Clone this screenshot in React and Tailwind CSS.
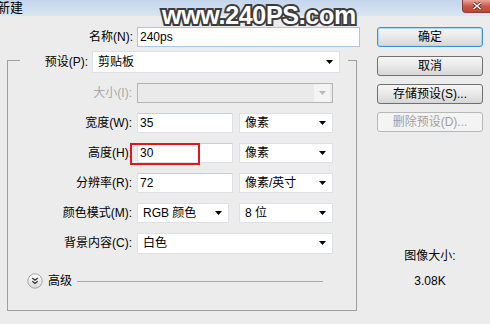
import React from "react";

const Arrow = ({ color = "#000" }) => (
  <svg width="7" height="4" viewBox="0 0 7 4">
    <path d="M0 0 L7 0 L3.5 4 Z" fill={color} />
  </svg>
);

const Select = ({ value, w, h = "h-[20px]", disabled }) => (
  <div
    className={`${w} ${h} flex items-center justify-between border ${
      disabled ? "bg-[#eaeaea] border-[#b4b4b4]" : "bg-white border-[#dde1e6]"
    }`}
  >
    <span className="pl-[5px] text-black">{value}</span>
    <span
      className={`h-full flex items-center justify-center w-[16px] mr-[2px] ${
        disabled ? "bg-[#f4f4f4]" : ""
      }`}
    >
      <Arrow color={disabled ? "#b8b8b8" : "#000"} />
    </span>
  </div>
);

const Input = ({ value, w }) => (
  <div className={`${w} h-[20px] flex items-center bg-white border border-[#dde1e6] border-t-[#c9ced6] pl-[2px] text-black`}>
    {value}
  </div>
);

const Row = ({ label, children, muted }) => (
  <div className="flex items-center h-[20px] mt-[10px]">
    <div className={`w-[124px] text-right ${muted ? "text-[#a8a8a8]" : "text-black"}`}>{label}</div>
    <div className="ml-[5px] flex items-center gap-[6px]">{children}</div>
  </div>
);

const Button = ({ children, primary, disabled }) => (
  <div
    className={`w-[106px] h-[20px] flex items-center justify-center rounded-[3px] border ${
      primary
        ? "border-[#3c8fd0] shadow-[inset_0_0_0_1px_#a6dcf5]"
        : disabled
        ? "border-[#b5b9bc]"
        : "border-[#707070]"
    } ${
      disabled
        ? "bg-[#f4f4f4] text-[#a0a0a0]"
        : "bg-gradient-to-b from-[#f6f6f6] via-[#e9e9e9] to-[#d6d6d6] text-black"
    }`}
  >
    {children}
  </div>
);

export default function App() {
  return (
    <div className="w-[490px] h-[324px] bg-[#ececec] relative overflow-hidden text-[12px] leading-[16px] font-['Liberation_Sans','Noto_Sans_CJK_SC',sans-serif]">
      {/* title bar */}
      <div className="h-[16px] flex items-center justify-between bg-gradient-to-b from-[#c4d6ec] to-[#d9e5f2]">
        <span className="ml-[-3px] text-[13px] text-black">新建</span>
        <div className="w-[28px] h-[13px] self-start flex items-center justify-center rounded-bl-[4px] bg-gradient-to-b from-[#e4a59b] via-[#cd5a4b] to-[#c3412f] border border-[#8e3a30] border-t-0 border-r-0">
          <svg width="10" height="8" viewBox="0 0 10 8">
            <path d="M1.5 1 L8.5 7 M8.5 1 L1.5 7" stroke="#5a2520" strokeWidth="3" />
            <path d="M1.5 1 L8.5 7 M8.5 1 L1.5 7" stroke="#fff" strokeWidth="1.6" />
          </svg>
        </div>
      </div>

      <div className="flex items-start">
        {/* left column */}
        <div className="w-[365px]">
          <div className="flex items-center h-[20px] mt-[11px]">
            <div className="w-[133px] text-right text-black">名称(N):</div>
            <div className="ml-[4px] w-[223px] h-[20px] flex items-center bg-white border border-[#a9c6e4] pl-[2px] text-black">
              240ps
            </div>
          </div>

          {/* group box */}
          <div className="mt-[13px] ml-[7px] w-[350px] h-[251px] border border-[#9f9f9f]">
            <div className="-mt-[10px] ml-[12px] w-[328px] h-[22px] flex items-center bg-[#ececec]">
              <div className="w-[68px] text-right text-black">预设(P):</div>
              <div className="ml-[4px]">
                <Select value="剪贴板" w="w-[248px]" h="h-[22px]" />
              </div>
            </div>

            <Row label="大小(I):" muted>
              <Select value="" w="w-[196px]" disabled />
            </Row>
            <Row label="宽度(W):">
              <Input value="35" w="w-[96px]" />
              <Select value="像素" w="w-[94px]" />
            </Row>
            <Row label="高度(H):">
              <Input value="30" w="w-[96px]" />
              <Select value="像素" w="w-[94px]" />
            </Row>
            <Row label="分辨率(R):">
              <Input value="72" w="w-[96px]" />
              <Select value="像素/英寸" w="w-[94px]" />
            </Row>
            <div className="flex items-center h-[20px] mt-[10px]">
              <div className="w-[124px] text-right text-black">颜色模式(M):</div>
              <div className="ml-[5px] flex items-center gap-[10px]">
                <Select value="RGB 颜色" w="w-[92px]" />
                <Select value="8 位" w="w-[94px]" />
              </div>
            </div>
            <Row label="背景内容(C):">
              <Select value="白色" w="w-[196px]" h="h-[21px]" />
            </Row>

            <div className="flex items-center h-[16px] mt-[20px] pl-[19px] pr-[33px]">
              <svg width="16" height="16" viewBox="0 0 16 16">
                <defs>
                  <linearGradient id="adv" x1="0" y1="0" x2="0" y2="1">
                    <stop offset="0" stopColor="#ffffff" />
                    <stop offset="1" stopColor="#d9d9d9" />
                  </linearGradient>
                </defs>
                <circle cx="8" cy="8" r="7.2" fill="url(#adv)" stroke="#a3a3a3" />
                <path d="M5.3 5 L8 7.2 L10.7 5 M5.3 8.2 L8 10.4 L10.7 8.2" fill="none" stroke="#333" strokeWidth="1.3" />
              </svg>
              <span className="ml-[5px] text-black">高级</span>
              <div className="flex-1 ml-[5px] h-px bg-[#a9a9a9]" />
            </div>
          </div>
        </div>

        {/* right column */}
        <div className="ml-[12px] w-[106px] flex flex-col">
          <div className="mt-[11px]">
            <Button primary>确定</Button>
          </div>
          <div className="mt-[9px]">
            <Button>取消</Button>
          </div>
          <div className="mt-[8px]">
            <Button>存储预设(S)...</Button>
          </div>
          <div className="mt-[8px]">
            <Button disabled>删除预设(D)...</Button>
          </div>
          <div className="mt-[116px] text-center text-black">图像大小:</div>
          <div className="mt-[9px] text-center text-black">3.08K</div>
        </div>
      </div>

      {/* red highlight annotation */}
      <div className="absolute left-[130px] top-[143px] w-[70px] h-[22px] border-2 border-[#e3161b]" />

      {/* watermark */}
      <div className="absolute left-[162px] top-[0px] text-[25px] leading-[30px] font-bold text-white tracking-[-0.3px] font-['Liberation_Sans',sans-serif] [-webkit-text-stroke:4px_#3c3c3c] [paint-order:stroke_fill]">
        www.240PS.com
      </div>
    </div>
  );
}
